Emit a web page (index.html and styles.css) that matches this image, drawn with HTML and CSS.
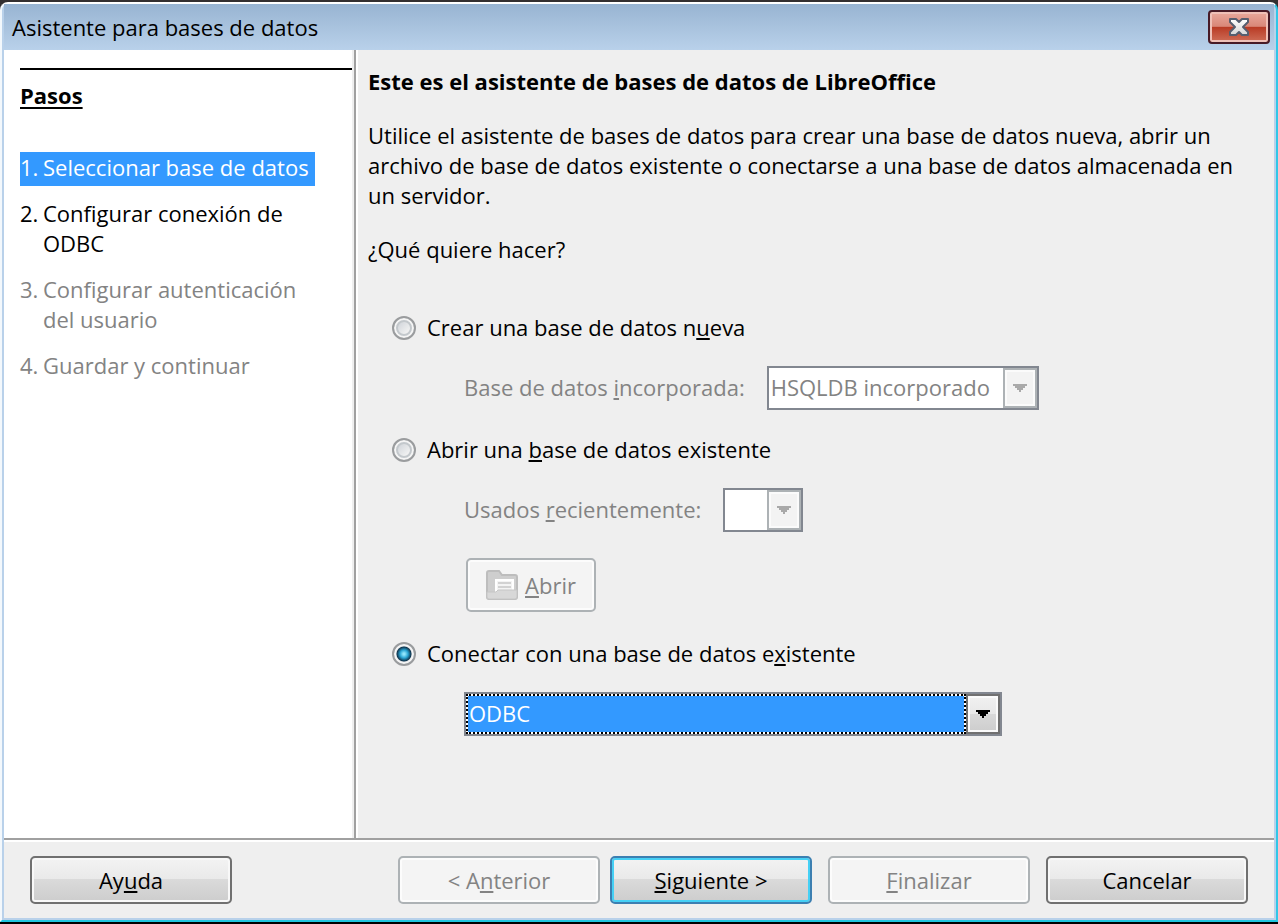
FILE: index.html
```html
<!DOCTYPE html>
<html lang="es">
<head>
<meta charset="utf-8">
<meta name="viewport" content="width=device-width, initial-scale=1">
<title>Asistente para bases de datos</title>
<link rel="stylesheet" href="styles.css">
</head>
<body>
<div class="window">
  <header class="titlebar">
    <span class="titlebar-text">Asistente para bases de datos</span>
    <button class="close" type="button" aria-label="Cerrar">
      <svg width="24" height="20" viewBox="0 0 24 20" aria-hidden="true">
        <defs><linearGradient id="cross" x1="0" y1="0" x2="0" y2="1"><stop offset="0" stop-color="#fff"/><stop offset="1" stop-color="#d6d6d6"/></linearGradient></defs>
        <path d="M3 2H9L12 5L15 2H21V5L16 10L21 15V18H15L12 15L9 18H3V15L8 10L3 5Z" fill="url(#cross)" stroke="#565e6f" stroke-width="2" stroke-linejoin="round"/>
      </svg>
    </button>
  </header>
  <div class="main">
    <nav class="steps" aria-labelledby="steps-title">
      <h2 class="steps-title" id="steps-title">Pasos</h2>
      <ol class="step-list">
        <li class="step step-current"><span class="step-number">1.</span><span>Seleccionar base de datos</span></li>
        <li class="step"><span class="step-number">2.</span><span>Configurar conexión de ODBC</span></li>
        <li class="step step-disabled"><span class="step-number">3.</span><span>Configurar autenticación del usuario</span></li>
        <li class="step step-disabled"><span class="step-number">4.</span><span>Guardar y continuar</span></li>
      </ol>
    </nav>
    <main class="content">
      <h1 class="heading">Este es el asistente de bases de datos de LibreOffice</h1>
      <p class="text">Utilice el asistente de bases de datos para crear una base de datos nueva, abrir un archivo de base de datos existente o conectarse a una base de datos almacenada en un servidor.</p>
      <p class="text" id="question">¿Qué quiere hacer?</p>
      <div class="options" role="radiogroup" aria-labelledby="question">
        <div class="option">
          <input class="radio" type="radio" name="action" id="create">
          <label class="label" for="create">Crear una base de datos n<u>u</u>eva</label>
        </div>
        <div class="field field-disabled">
          <label class="label" for="embedded">Base de datos <u>i</u>ncorporada:</label>
          <span class="combo combo-embedded">
            <select class="combo-select" id="embedded" disabled><option>HSQLDB incorporado</option></select>
            <svg class="combo-arrow" viewBox="0 0 14 8" aria-hidden="true"><path d="M0 0H14V2H12V4H10V6H8V8H6V6H4V4H2V2H0Z"/></svg>
          </span>
        </div>
        <div class="option">
          <input class="radio" type="radio" name="action" id="open">
          <label class="label" for="open">Abrir una <u>b</u>ase de datos existente</label>
        </div>
        <div class="field field-disabled">
          <label class="label" for="recent">Usados <u>r</u>ecientemente:</label>
          <span class="combo combo-recent">
            <select class="combo-select" id="recent" disabled><option></option></select>
            <svg class="combo-arrow" viewBox="0 0 14 8" aria-hidden="true"><path d="M0 0H14V2H12V4H10V6H8V8H6V6H4V4H2V2H0Z"/></svg>
          </span>
        </div>
        <button class="button button-open" type="button" disabled>
          <svg width="32" height="30" viewBox="0 0 32 30" aria-hidden="true">
            <path d="M1 3Q1 1 3 1H13L16 5H29Q31 5 31 7V27Q31 29 29 29H3Q1 29 1 27Z" fill="#cecece" stroke="#bdbdbd" stroke-width="2"/>
            <rect x="10" y="10" width="17" height="12" fill="#f4f4f4" stroke="#fff" stroke-width="2"/>
            <path d="M12 13H25M12 17H25" stroke="#d2d2d2" stroke-width="2"/>
            <path d="M1 22H10L12 20H31V27Q31 29 29 29H3Q1 29 1 27Z" fill="#d8d8d8" stroke="#c6c6c6" stroke-width="1"/>
          </svg>
          <span><u>A</u>brir</span>
        </button>
        <div class="option">
          <input class="radio" type="radio" name="action" id="connect" checked>
          <label class="label" for="connect">Conectar con una base de datos e<u>x</u>istente</label>
        </div>
        <div class="field">
          <span class="combo combo-active">
            <select class="combo-select" id="driver" aria-labelledby="connect"><option>ODBC</option></select>
            <svg class="combo-arrow" viewBox="0 0 14 8" aria-hidden="true"><path d="M0 0H14V2H12V4H10V6H8V8H6V6H4V4H2V2H0Z"/></svg>
          </span>
        </div>
      </div>
    </main>
  </div>
  <footer class="footer">
    <button class="button" type="button">Ay<u>u</u>da</button>
    <div class="footer-actions">
      <div class="footer-travel">
        <button class="button" type="button" disabled>&lt; A<u>n</u>terior</button>
        <button class="button button-default" type="button"><u>S</u>iguiente &gt;</button>
      </div>
      <button class="button" type="button" disabled><u>F</u>inalizar</button>
      <button class="button" type="button">Cancelar</button>
    </div>
  </footer>
</div>
</body>
</html>
```
FILE: styles.css
```css
*,
*::after {
  box-sizing: border-box;
}

body {
  margin: 0;
  min-height: 100vh;
  display: flex;
  padding: 2px 0;
  background: linear-gradient(#332f30 0 50%, #000 50%);
  color: #000;
  font: 22px/30px "Open Sans", "Noto Sans", sans-serif;
}

button,
select {
  font: inherit;
  color: inherit;
}

u {
  text-decoration-thickness: 2px;
  text-underline-offset: 2px;
  text-decoration-skip-ink: none;
}

.window {
  flex: 1;
  display: flex;
  flex-direction: column;
  border: 2px solid;
  border-color: #fff #30c7e7 #20c5df #f3f8fc;
  border-radius: 8px 8px 0 0;
  padding: 0 2px 2px;
  background: #b9d1ea;
}

.titlebar {
  display: flex;
  align-items: center;
  justify-content: space-between;
  height: 46px;
  padding: 0 4px 0 8px;
  background: linear-gradient(#98b4d2, #b9d1ea);
}

.close {
  display: flex;
  align-items: center;
  justify-content: center;
  width: 62px;
  height: 34px;
  padding: 0;
  border: 2px solid #471a26;
  border-radius: 4px;
  box-shadow: inset 0 0 0 2px #efc0b7;
  background: linear-gradient(#e9a99d, #d98778 48%, #b83a24 50%, #cf6e58);
}

.main {
  flex: 1;
  display: flex;
  border-bottom: 2px solid #a0a0a0;
  background: #efefef;
}

.steps {
  flex: none;
  width: 350px;
  padding: 18px 0 0 16px;
  border-right: 2px solid #efefef;
  background: #fff;
}

.steps-title {
  margin: 0 0 42px;
  padding-top: 10px;
  border-top: 2px solid #000;
  font-size: 22px;
  line-height: 30px;
  text-decoration: underline 2px;
  text-underline-offset: 3px;
}

.step-list {
  display: flex;
  flex-direction: column;
  align-items: flex-start;
  gap: 16px;
  margin: 0;
  padding: 0 36px 0 0;
  list-style: none;
}

.step {
  display: flex;
}

.step-number {
  flex: none;
  width: 23px;
}

.step-current {
  margin-bottom: -4px;
  padding: 0 6px 4px 0;
  background: #3399ff;
  color: #fff;
  white-space: nowrap;
}

.step-disabled,
.field-disabled {
  color: #838383;
}

.content {
  flex: 1;
  min-width: 0;
  padding: 16px 22px 16px 12px;
  border-left: 2px solid #a0a0a0;
  box-shadow: inset 2px 0 #fff;
}

.heading {
  margin: 0 0 24px;
  font-size: 22px;
  line-height: 30px;
}

.text {
  margin: 0 0 24px;
}

.options {
  display: flex;
  flex-direction: column;
  align-items: flex-start;
  padding: 24px 0 0 24px;
}

.option {
  display: flex;
  align-items: center;
  gap: 11px;
}

.label {
  padding-bottom: 2px;
}

.radio {
  appearance: none;
  width: 24px;
  height: 24px;
  margin: 0;
  border: 2px solid #9a9c9e;
  border-radius: 50%;
  box-shadow: inset 0 0 0 2px #f5f5f5, inset 0 0 0 4px #c3c8cc;
  background: linear-gradient(135deg, #c3c9d0, #f4f4f4 75%);
}

.radio:checked {
  background: radial-gradient(circle at center, #8fe4fb 0 1px, #2aa5d4 4px, #10364f 7px, #d4d8dc 8px);
  box-shadow: inset 0 0 0 2px #f5f5f5;
}

.field {
  display: flex;
  align-items: center;
  gap: 22px;
  margin: 22px 0 24px 72px;
}

.combo {
  position: relative;
  display: flex;
  height: 44px;
  border: 2px solid #828790;
  background: #fff;
}

.combo::after {
  content: "";
  position: absolute;
  inset: 0 0 0 auto;
  width: 34px;
  border: 2px solid #adb2b5;
  box-shadow: inset 0 0 0 2px #fbfbfb;
  background: #f3f3f3;
  pointer-events: none;
}

.combo-embedded {
  width: 272px;
}

.combo-recent {
  width: 80px;
}

.combo-select {
  appearance: none;
  width: 100%;
  padding: 0 34px 2px 2px;
  border: 0;
  background: transparent;
  opacity: 1;
}

.combo-arrow {
  position: absolute;
  z-index: 1;
  top: 16px;
  right: 10px;
  width: 14px;
  height: 8px;
  fill: #a9a9a9;
  pointer-events: none;
}

.combo-active {
  width: 538px;
}

.combo-active::after {
  border-color: #707070;
  box-shadow: inset 0 0 0 2px #fafafa;
  background: linear-gradient(#f1f1f1, #e8e8e8 50%, #d9d9d9 50%, #cdcdcd);
}

.combo-active .combo-select {
  margin-right: 34px;
  padding: 0 0 2px 1px;
  border: 2px dotted #000;
  outline: 0;
  background: linear-gradient(#3399ff, #3399ff) padding-box, #fff;
  color: #fff;
}

.combo-active .combo-arrow {
  fill: #000;
}

.button {
  display: flex;
  align-items: center;
  justify-content: center;
  width: 202px;
  height: 48px;
  padding: 0;
  border: 2px solid #707070;
  border-radius: 5px;
  box-shadow: inset 0 0 0 2px #f8f8f8;
  background: linear-gradient(#f3f3f3, #e9e9e9 48%, #dadada 48%, #cdcdcd);
}

.button:disabled {
  border-color: #adb2b5;
  box-shadow: inset 0 0 0 2px #fcfcfc;
  background: #f4f4f4;
  color: #838383;
}

.button-default {
  border-color: #3c7fb1;
  box-shadow: inset 0 0 0 2px #45d0f5;
}

.button-open {
  gap: 7px;
  width: 130px;
  height: 54px;
  margin: 2px 0 26px 74px;
}

.footer {
  display: flex;
  justify-content: space-between;
  padding: 14px 26px;
  border-top: 2px solid #fff;
  background: #efefef;
}

.footer-actions {
  display: flex;
  gap: 16px;
}

.footer-travel {
  display: flex;
  gap: 10px;
}
```
